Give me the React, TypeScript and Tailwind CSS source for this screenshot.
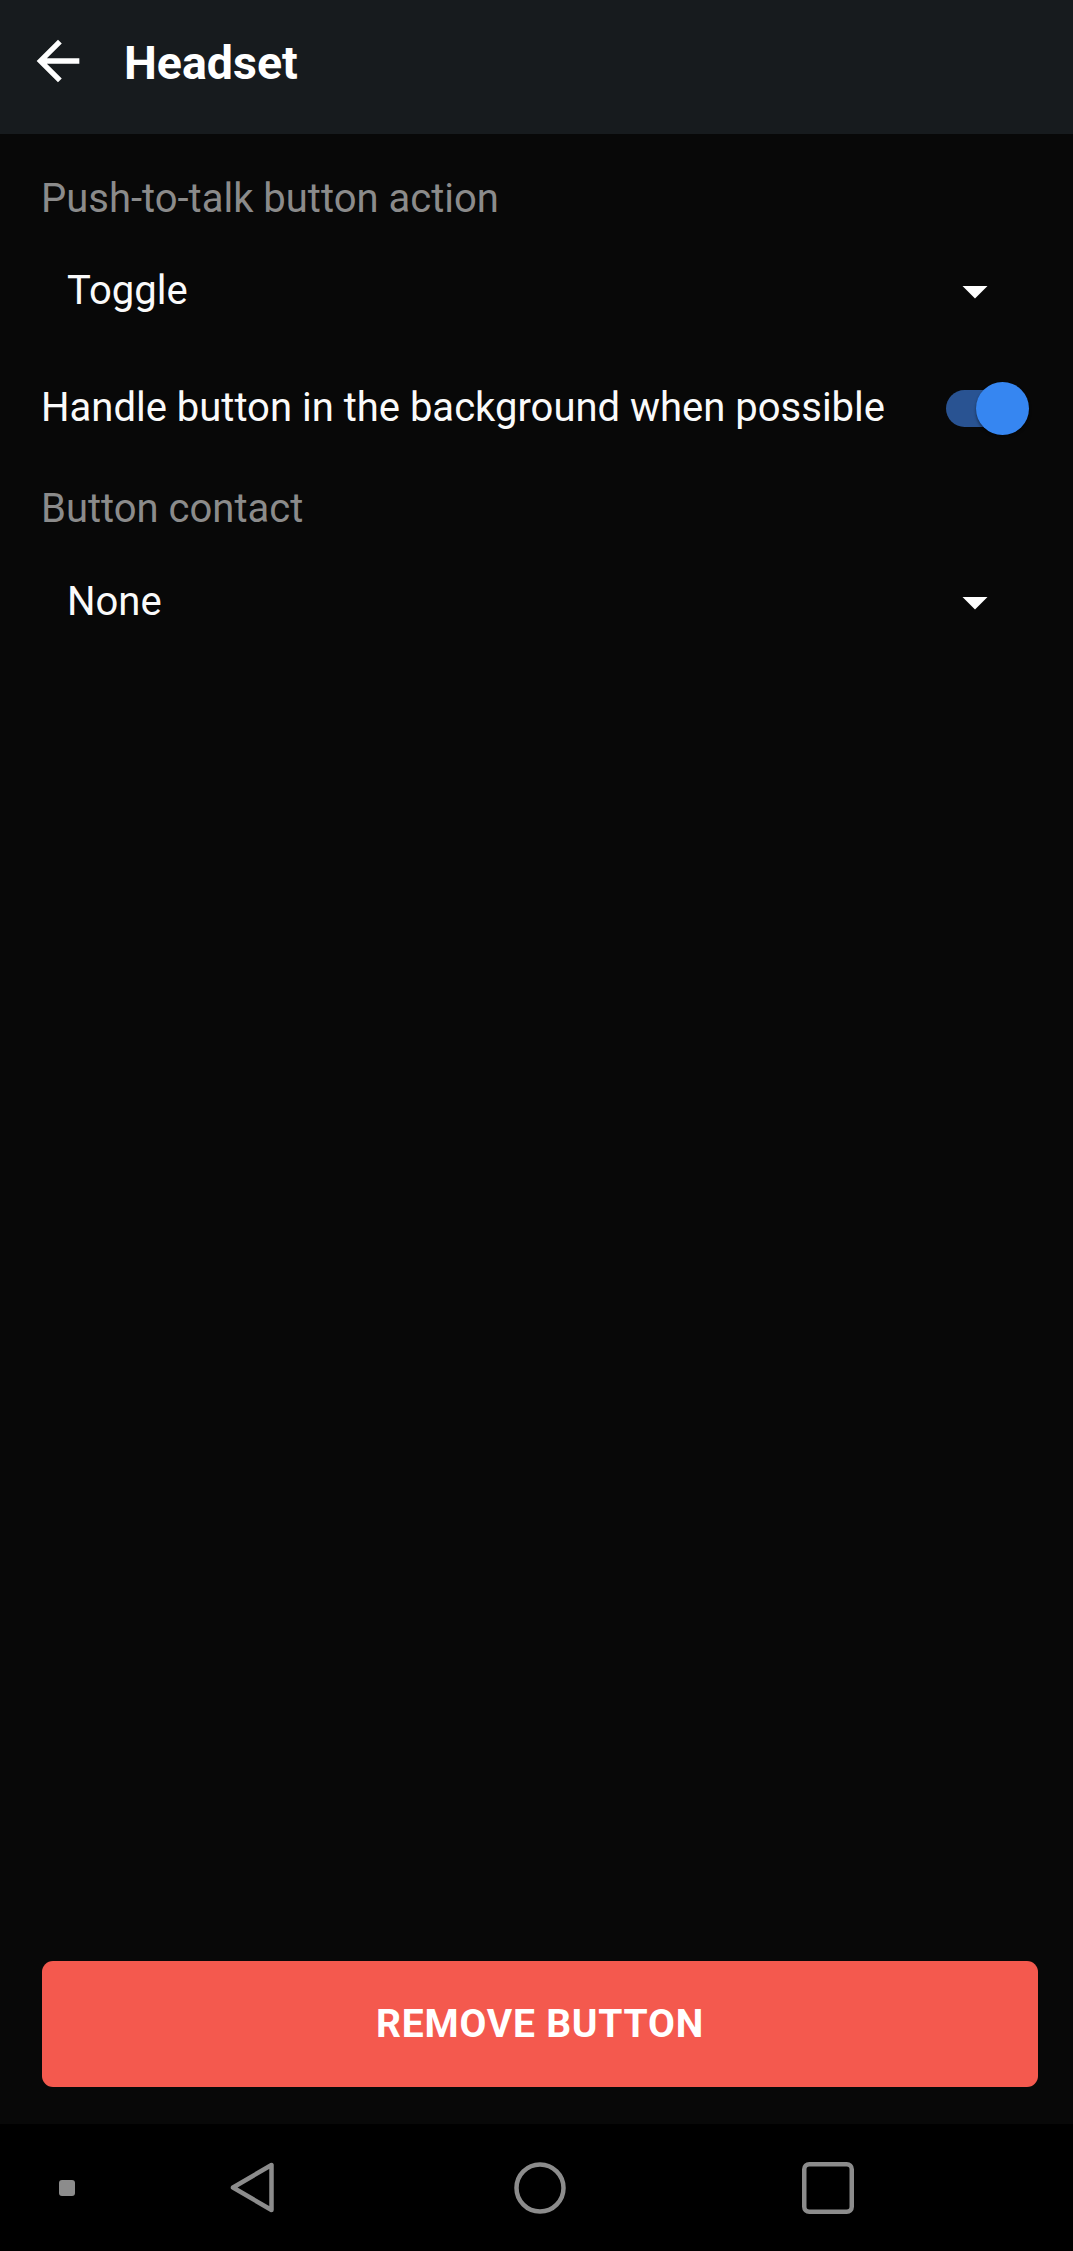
import React, { useState } from 'react';

// material-ish glyphs, drawn to match the Android chrome
const BackArrow = () => (
  <svg viewBox="0 0 24 24" className="h-[64px] w-[64px]" fill="#ffffff">
    <path d="M20 11H7.83l5.59-5.59L12 4l-8 8 8 8 1.41-1.41L7.83 13H20v-2z" />
  </svg>
);

const DropArrow = () => (
  <svg viewBox="0 0 24 24" className="h-[60px] w-[60px]" fill="#ffffff">
    <path d="M7 10l5 5 5-5z" />
  </svg>
);

const Dropdown: React.FC<{ value: string; className?: string }> = ({ value, className = '' }) => (
  <div className={`flex h-[96px] items-center justify-between pl-[26px] pr-[24px] ${className}`}>
    <span className="text-[40px] leading-[48px] text-[#fafafa]">{value}</span>
    <DropArrow />
  </div>
);

const Switch: React.FC<{ on: boolean; onToggle: () => void }> = ({ on, onToggle }) => (
  <button onClick={onToggle} className="relative h-[53px] w-[83px] shrink-0">
    <span className={`absolute left-0 top-[8px] h-[37px] w-[75px] rounded-full ${on ? 'bg-[#295392]' : 'bg-[#5a5a5a]'}`} />
    <span
      className={`absolute top-0 h-[53px] w-[53px] rounded-full shadow-[0_2px_3px_rgba(0,0,0,0.45)] ${
        on ? 'right-0 bg-[#3686f1]' : 'left-0 bg-[#d8d8d8]'
      }`}
    />
  </button>
);

export default function App() {
  const [background, setBackground] = useState(true);

  return (
    <div className="flex h-[2251px] flex-col bg-[#080808] font-['Roboto',sans-serif]">
      {/* Toolbar */}
      <header className="flex h-[134px] shrink-0 items-start bg-[#171b1e]">
        <div className="ml-[26px] mt-[29px]">
          <BackArrow />
        </div>
        <h1 className="ml-[34px] mt-[36px] text-[46.5px] font-bold leading-[54px] text-white">Headset</h1>
      </header>

      {/* Settings */}
      <main className="flex flex-1 flex-col">
        <div className="pl-[41px] pr-[44px]">
          <p className="mt-[41px] text-[40px] leading-[48px] text-[#8b8b8b]">Push-to-talk button action</p>
          <Dropdown value="Toggle" className="mt-[20px]" />

          <div className="mt-[21px] flex h-[96px] items-center justify-between">
            <span className="text-[40px] leading-[48px] text-[#fafafa]">
              Handle button in the background when possible
            </span>
            <Switch on={background} onToggle={() => setBackground(!background)} />
          </div>

          <p className="mt-[29px] text-[40px] leading-[48px] text-[#8b8b8b]">Button contact</p>
          <Dropdown value="None" className="mt-[21px]" />
        </div>

        <div className="flex-1" />

        <div className="mb-[37px] pl-[42px] pr-[35px]">
          <button className="flex h-[126px] w-full items-center justify-center rounded-[11px] bg-[#f4594e] text-[39px] font-bold tracking-[0.02em] text-white">
            REMOVE BUTTON
          </button>
        </div>
      </main>

      {/* System navigation bar */}
      <nav className="flex h-[127px] shrink-0 items-center bg-black pl-[59px]">
        <span className="h-[16px] w-[16px] rounded-[3px] bg-[#8c8c8c]" />
        <svg viewBox="0 0 47 51" className="ml-[154px] h-[51px] w-[47px]" fill="none" stroke="#8c8c8c" strokeWidth="4.5" strokeLinejoin="round">
          <path d="M4 25.5 L42.5 3 L42.5 48 Z" />
        </svg>
        <svg viewBox="0 0 52 52" className="ml-[238px] h-[52px] w-[52px]" fill="none" stroke="#8c8c8c" strokeWidth="4.5">
          <circle cx="26" cy="26" r="23.5" />
        </svg>
        <svg viewBox="0 0 52 52" className="ml-[236px] h-[52px] w-[52px]" fill="none" stroke="#8c8c8c" strokeWidth="4.5">
          <rect x="2.25" y="2.25" width="47.5" height="47.5" rx="5" />
        </svg>
      </nav>
    </div>
  );
}
